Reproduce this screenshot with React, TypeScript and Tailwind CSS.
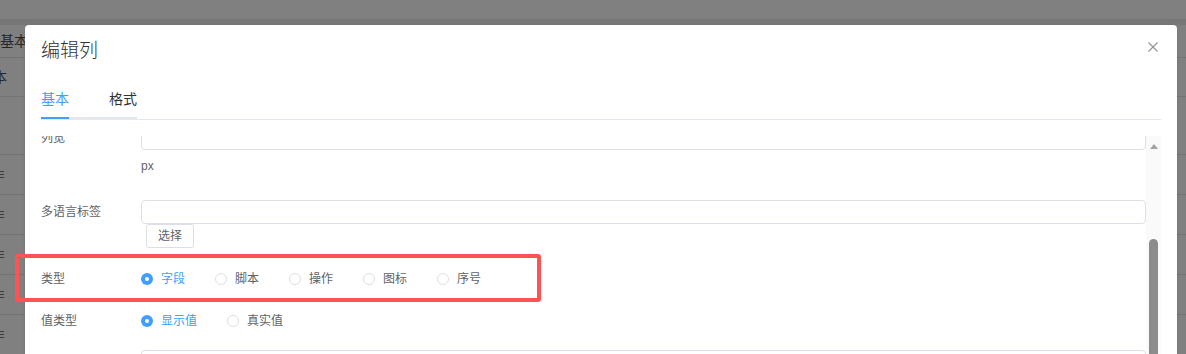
import React from 'react';

const font = { fontFamily: '"Liberation Sans", "Noto Sans CJK SC", sans-serif' };

const Handle = (): React.ReactElement => (
  <div className="flex flex-col gap-[2px]">
    <span className="block h-px w-[4px] bg-[#3c3c3c]" />
    <span className="block h-px w-[4px] bg-[#3c3c3c]" />
    <span className="block h-px w-[4px] bg-[#3c3c3c]" />
  </div>
);

const Radio = ({ label, checked }: { label: string; checked?: boolean }): React.ReactElement => (
  <label className="mr-[30px] flex items-center">
    {checked ? (
      <span className="flex h-[12px] w-[12px] items-center justify-center rounded-full bg-[#409eff]">
        <span className="h-[4px] w-[4px] rounded-full bg-white" />
      </span>
    ) : (
      <span className="h-[12px] w-[12px] rounded-full border border-[#dcdfe6] bg-white" />
    )}
    <span className={`ml-[8px] text-[12px] leading-4 ${checked ? 'text-[#409eff]' : 'text-[#606266]'}`}>
      {label}
    </span>
  </label>
);

const Background = (): React.ReactElement => (
  <div className="flex flex-col">
    <div className="h-[19px]" />
    <div className="h-[6px] bg-[#777777]" />
    <div className="flex h-[33px] items-center border-b border-[#737373]">
      <span className="text-[14px] leading-4 text-[#262626]">基本</span>
    </div>
    <div className="flex h-[39px] items-center border-b border-[#737373]">
      <span className="-ml-[21px] text-[14px] leading-4 text-[#262626]">基本</span>
    </div>
    <div className="h-[58px] border-b border-[#737373]" />
    {[0, 1, 2, 3, 4].map((i) => (
      <div key={i} className="flex h-[40px] items-center border-b border-[#737373]">
        <Handle />
      </div>
    ))}
  </div>
);

const App = (): React.ReactElement => {
  return (
    <div className="relative h-[354px] w-[1186px] overflow-hidden bg-[#808080]" style={font}>
      <Background />

      <div className="absolute left-[25px] top-[25px] flex h-[340px] w-[1152px] flex-col rounded-[4px] bg-white shadow-sm">
        {/* header */}
        <div className="flex items-start justify-between pl-4 pr-[19px] pt-[14px]">
          <span className="text-[19px] font-light leading-6 text-[#303133]">编辑列</span>
          <svg className="mt-[3px]" width="10" height="10" viewBox="0 0 10 10">
            <path d="M0.5 0.5 L9.5 9.5 M9.5 0.5 L0.5 9.5" stroke="#909399" strokeWidth="1.1" />
          </svg>
        </div>

        {/* tabs */}
        <div className="mx-4 mt-[17px] flex h-[40px] border-b border-[#e4e7ed]">
          <div className="relative flex border-b-2 border-[#e4e7ed]">
            <div className="flex items-center pr-5 text-[14px] leading-4 text-[#409eff]">基本</div>
            <div className="flex items-center pl-5 text-[14px] leading-4 text-[#303133]">格式</div>
            <span className="absolute -bottom-[2px] left-0 h-[2px] w-[28px] bg-[#409eff]" />
          </div>
        </div>

        {/* body */}
        <div className="ml-4 mr-4 mt-[16px] flex min-h-0 flex-1 overflow-hidden">
          <div className="flex-1">
            <div className="-mt-[10px] flex flex-col">
              <div className="flex items-center">
                <span className="w-[100px] text-[12px] leading-4 text-[#606266]">列宽</span>
                <div className="h-[24px] flex-1 rounded-[4px] border border-[#dcdfe6]" />
              </div>
              <div className="ml-[100px] mt-2 text-[12px] leading-4 text-[#606266]">px</div>

              <div className="mt-[26px] flex items-center">
                <span className="w-[100px] text-[12px] leading-4 text-[#606266]">多语言标签</span>
                <div className="h-[24px] flex-1 rounded-[4px] border border-[#dcdfe6]" />
              </div>
              <div className="ml-[105px] flex">
                <button className="flex h-[24px] w-[48px] items-center justify-center rounded-[3px] border border-[#dcdfe6] bg-white text-[12px] leading-4 text-[#606266]">
                  选择
                </button>
              </div>

              <div className="mt-[10px] flex h-[42px] items-center">
                <span className="w-[100px] text-[12px] leading-4 text-[#606266]">类型</span>
                <Radio label="字段" checked />
                <Radio label="脚本" />
                <Radio label="操作" />
                <Radio label="图标" />
                <Radio label="序号" />
              </div>

              <div className="flex h-[42px] items-center">
                <span className="w-[100px] text-[12px] leading-4 text-[#606266]">值类型</span>
                <Radio label="显示值" checked />
                <Radio label="真实值" />
              </div>

              <div className="ml-[100px] mt-[8px] h-[24px] rounded-[4px] border border-[#dcdfe6]" />
            </div>
          </div>

          {/* scrollbar */}
          <div className="flex w-[15px] flex-col items-center bg-[#fafafa]">
            <svg className="mt-[8px]" width="8" height="5" viewBox="0 0 8 5">
              <path d="M4 0 L8 5 L0 5 Z" fill="#a3a3a3" />
            </svg>
            <div className="mt-[90px] w-[9px] flex-1 rounded-t-full bg-[#8c8c8c]" />
          </div>
        </div>
      </div>

      {/* annotation */}
      <div className="absolute left-[15px] top-[254px] h-[48px] w-[526px] rounded-[3px] border-4 border-[#ff5252]" />
    </div>
  );
};

export default App;
